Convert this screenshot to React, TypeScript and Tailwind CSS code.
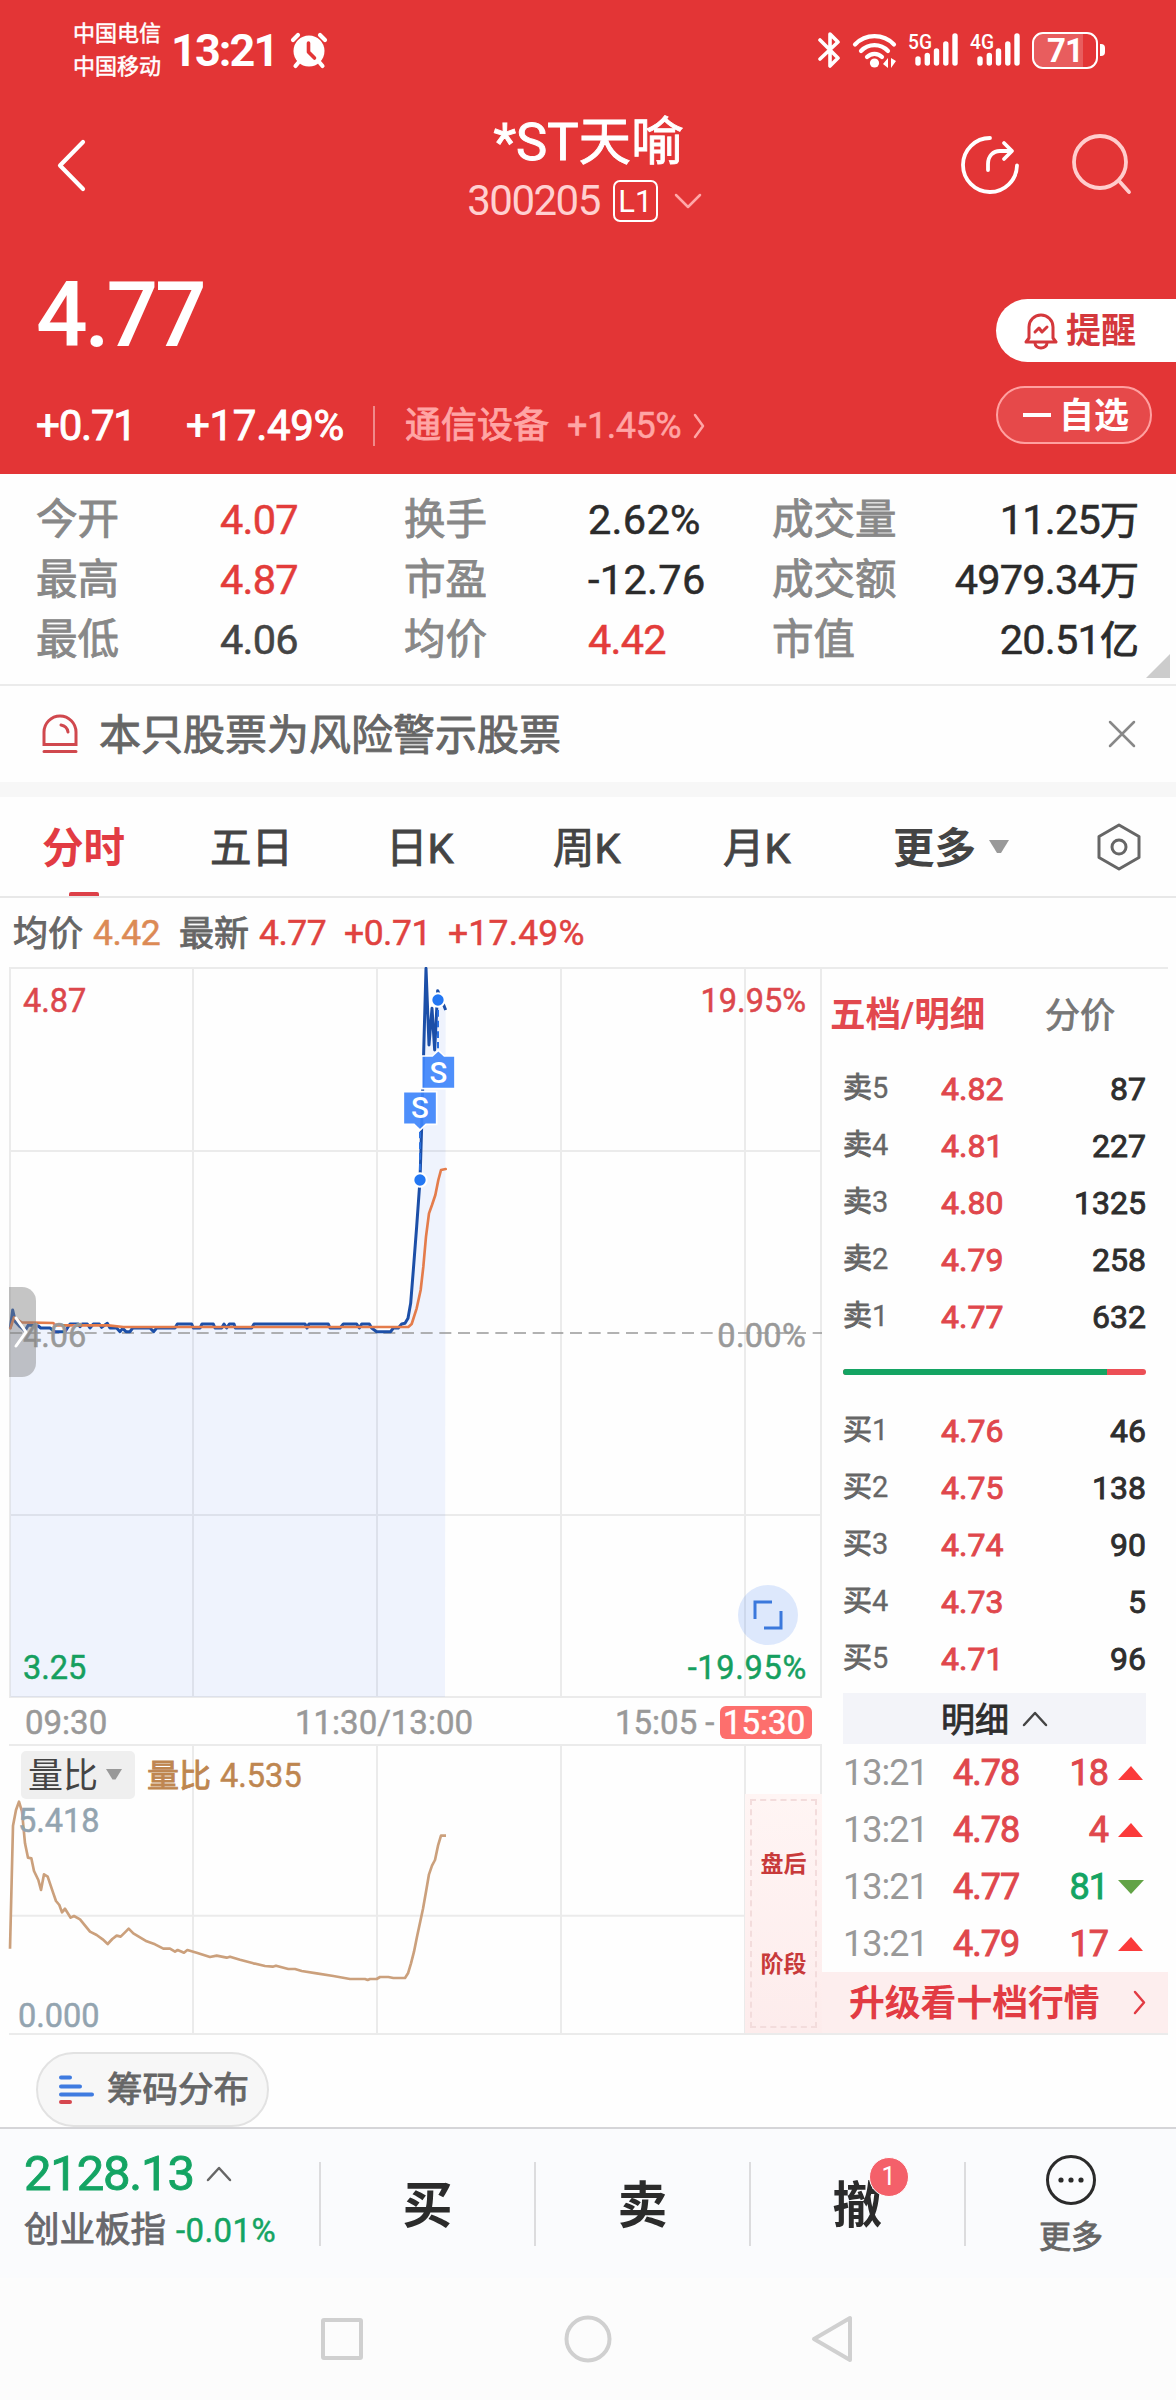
import type { ReactNode } from 'react';
import clsx from 'clsx';

interface Quote {
  label: string;
  value: string;
  unit?: string;
  tone?: 'up' | 'flat';
}

const quotes: Quote[][] = [
  [
    { label: '今开', value: '4.07', tone: 'up' },
    { label: '换手', value: '2.62%' },
    { label: '成交量', value: '11.25', unit: '万' },
  ],
  [
    { label: '最高', value: '4.87', tone: 'up' },
    { label: '市盈', value: '-12.76' },
    { label: '成交额', value: '4979.34', unit: '万' },
  ],
  [
    { label: '最低', value: '4.06', tone: 'flat' },
    { label: '均价', value: '4.42', tone: 'up' },
    { label: '市值', value: '20.51', unit: '亿' },
  ],
];

const asks = [
  ['5', '4.82', '87'],
  ['4', '4.81', '227'],
  ['3', '4.80', '1325'],
  ['2', '4.79', '258'],
  ['1', '4.77', '632'],
];

const bids = [
  ['1', '4.76', '46'],
  ['2', '4.75', '138'],
  ['3', '4.74', '90'],
  ['4', '4.73', '5'],
  ['5', '4.71', '96'],
];

const trades = [
  { time: '13:21', price: '4.78', volume: '18', up: true },
  { time: '13:21', price: '4.78', volume: '4', up: true },
  { time: '13:21', price: '4.77', volume: '81', up: false },
  { time: '13:21', price: '4.79', volume: '17', up: true },
];

const medium = '[-webkit-text-stroke:0.9px]';
const semi = '[-webkit-text-stroke:0.5px]';

// Chart series, in thirds of a pixel
const priceLine =
  '31,1105 38,1050 46,1085 60,1100 75,1112 85,1095 115,1098 122,1104 150,1104 165,1115 195,1115 210,1092 235,1092 240,1100 247,1092 262,1092 270,1104 280,1092 298,1092 305,1102 322,1090 330,1104 350,1104 360,1115 368,1105 378,1115 390,1115 398,1104 450,1104 461,1115 470,1104 525,1104 532,1092 575,1092 580,1104 600,1104 606,1092 640,1092 645,1104 665,1104 672,1092 680,1104 688,1092 702,1092 706,1104 755,1104 762,1092 915,1092 921,1104 927,1092 985,1092 990,1104 1020,1104 1030,1092 1070,1092 1078,1104 1085,1092 1108,1092 1115,1104 1130,1115 1172,1115 1180,1104 1195,1104 1205,1092 1215,1090 1224,1075 1232,1030 1240,930 1250,800 1260,660 1265,500 1272,240 1278,25 1287,255 1296,145 1304,270 1313,92 1325,120 1337,150';

const averageLine =
  '31,1105 42,1072 65,1087 160,1089 165,1096 325,1096 370,1101 1225,1101 1235,1092 1250,1045 1262,990 1270,920 1278,830 1287,760 1296,735 1306,705 1315,660 1323,630 1337,627';

const ratioLine =
  '30,806 39,437 48,390 57,365 66,395 75,490 84,533 94,535 102,573 115,600 123,630 132,583 143,590 160,640 168,663 178,675 186,697 195,686 212,713 222,708 240,718 270,755 290,765 308,778 323,792 337,777 350,767 362,770 375,757 386,746 400,760 440,784 465,793 490,806 510,806 525,815 533,810 552,818 562,810 590,818 630,831 650,827 680,833 690,830 720,839 760,850 795,858 818,860 828,857 865,867 885,867 905,873 950,880 1000,888 1050,897 1095,897 1103,900 1110,897 1130,897 1140,891 1165,891 1180,894 1215,894 1224,880 1233,850 1242,815 1251,770 1260,728 1269,686 1278,635 1287,583 1296,557 1305,540 1314,497 1323,467 1338,467';

function Chevron({ className, d, width, height, stroke = 2.5 }: {
  className?: string;
  d: string;
  width: number;
  height: number;
  stroke?: number;
}) {
  return (
    <svg width={width} height={height} viewBox={`0 0 ${width} ${height}`} className={clsx('shrink-0', className)}>
      <path d={d} fill="none" stroke="currentColor" strokeWidth={stroke} strokeLinecap="round" strokeLinejoin="round" />
    </svg>
  );
}

function Signal({ label }: { label: string }) {
  return (
    <svg width="54" height="52" viewBox="0 -8 54 52" className="shrink-0 overflow-visible">
      <text x="0" y="17" fontSize="21" fontWeight="500" fill="#fff" textLength="24" lengthAdjust="spacingAndGlyphs">
        {label}
      </text>
      <g stroke="#fff" strokeWidth="5.4" strokeLinecap="round">
        <path d="M10 27v4M19.3 23.5v7.5M28.5 19v12M37.8 12v19M47 4v27" />
      </g>
    </svg>
  );
}

function StatusBar() {
  return (
    <div className="flex h-[100px] items-center pl-[73px] pr-[71px] text-white">
      <div className={clsx('-mt-px w-[98px] text-[22px] leading-[33px]', semi)}>
        <div className="whitespace-nowrap">中国电信</div>
        <div className="whitespace-nowrap">中国移动</div>
      </div>
      <div className="w-[118px] text-[45px] font-bold leading-none tracking-[-1.900px]">13:21</div>
      <svg width="40" height="40" viewBox="0 0 40 40" className="shrink-0">
        <circle cx="20" cy="21" r="15.5" fill="#fff" />
        <path d="M9 33l-2.500 3M31 33l2.500 3M4 10l5-5M36 10l-5-5" stroke="#fff" strokeWidth="4.200" strokeLinecap="round" />
        <path d="M19.500 13v9l6 6" fill="none" stroke="#e33536" strokeWidth="3.600" strokeLinecap="round" strokeLinejoin="round" />
      </svg>
      <svg width="24" height="38" viewBox="0 0 24 38" className="ml-auto shrink-0">
        <path d="M2 9l18 18-8 8V3l8 8L2 28" fill="none" stroke="#fff" strokeWidth="3.600" strokeLinecap="round" strokeLinejoin="round" />
      </svg>
      <svg width="46" height="38" viewBox="0 0 46 38" className="ml-[10px] shrink-0">
        <g fill="none" stroke="#fff" strokeWidth="4.200" strokeLinecap="round">
          <path d="M3 13.500a27 27 0 0 1 39 0" />
          <path d="M9 20a18.500 18.500 0 0 1 27 0" />
          <path d="M15 26a10.500 10.500 0 0 1 15 0" />
        </g>
        <circle cx="22.500" cy="32" r="4.600" fill="#fff" />
        <path d="M31 33l5-6v10M39 27v10l5-7z" fill="#fff" />
      </svg>
      <div className="ml-[10px] flex gap-[8px]">
        <Signal label="5G" />
        <Signal label="4G" />
      </div>
      <div className="relative ml-[8px] flex h-[37px] w-[66px] shrink-0 items-center justify-center overflow-hidden rounded-[11px] border-[2.5px] border-white">
        <div className="absolute inset-y-0 left-0 w-[49px] bg-white/20" />
        <span className="relative text-[33px] font-bold leading-none tracking-[-1px]">71</span>
      </div>
      <div className="ml-[2px] h-[12px] w-[5px] shrink-0 rounded-r-[4px] bg-white" />
    </div>
  );
}

function TitleBar() {
  return (
    <div className="flex h-[130px] items-start pl-[56px] pr-[43px] text-white">
      <Chevron d="M27 4L4 27.500 27 51" width={31} height={55} stroke={4.2} className="mt-[38px]" />
      <div className="ml-[135px] flex flex-1 flex-col items-center">
        <div className={clsx('mt-[13px] h-[58px] whitespace-nowrap pr-[3px] text-[52.500px] leading-[58px]', medium)}>*ST天喻</div>
        <div className="mt-[5px] flex h-[50px] items-center pr-[11px]">
          <span className="text-[42px] leading-none tracking-[-1.500px] text-[#ffd0d0]">300205</span>
          <span className="ml-[13px] flex h-[42px] w-[45px] items-center justify-center rounded-[7px] border-2 border-white text-[31px] leading-none">
            L1
          </span>
          <Chevron d="M2 3l12 12L26 3" width={28} height={18} className="ml-[16px] text-[#ffa8a8]" />
        </div>
      </div>
      <svg width="62" height="62" viewBox="0 0 62 62" className="mt-[34px] shrink-0">
        <g fill="none" stroke="#fff" strokeWidth="3.800" strokeLinecap="round" strokeLinejoin="round">
          <path d="M32 4a27 27 0 1 0 27 27.500" />
          <path d="M30 36v-6c0-8 5-13 12-13h11M46 9l8 8-8 8" />
        </g>
      </svg>
      <svg width="62" height="62" viewBox="0 0 62 62" className="ml-[51px] mt-[34px] shrink-0">
        <circle cx="29" cy="28" r="26" fill="none" stroke="#ffcdcd" strokeWidth="3.800" />
        <path d="M49 48l9 10" stroke="#ffcdcd" strokeWidth="3.800" strokeLinecap="round" />
      </svg>
    </div>
  );
}

function PriceHeader() {
  return (
    <div className="flex h-[244px] text-white">
      <div className="flex-1 pl-[36px]">
        <div className="mt-[39px] h-[92px] text-[91px] font-medium leading-[92px] tracking-[-3.200px]">4.77</div>
        <div className="mt-[41px] flex h-[48px] items-center leading-none">
          <span className={clsx('w-[150px] text-[42px] tracking-[-1.200px]', medium)}>+0.71</span>
          <span className={clsx('w-[187px] text-[42px] tracking-[-0.300px]', medium)}>+17.49%</span>
          <span className="h-[40px] w-[2px] bg-[#f08a8a]" />
          <span className={clsx('ml-[30px] text-[36px] text-[#ffa5a5]', medium)}>通信设备</span>
          <span className={clsx('ml-[18px] text-[36px] tracking-[-0.500px] text-[#ffa5a5]', semi)}>+1.45%</span>
          <Chevron d="M3 3l8 11-8 11" width={15} height={28} className="ml-[11px] text-[#ffa5a5]" />
        </div>
      </div>
      <div className="w-[180px]">
        <div className="mt-[69px] flex h-[63px] items-center rounded-l-full bg-white pl-[28px] text-[#d4383c]">
          <svg width="34" height="38" viewBox="0 0 34 38">
            <g fill="none" stroke="#d4383c" strokeWidth="3" strokeLinejoin="round" strokeLinecap="round">
              <path d="M5 26V15a12 12 0 0 1 24 0v11l3 4H2z" />
              <path d="M11 31a6 5 0 0 0 12 0M11 20l4-4 3 4 5-5" />
            </g>
          </svg>
          <span className="ml-[8px] pt-[2px] text-[35px] font-bold leading-none">提醒</span>
        </div>
        <div className="mt-[24px] flex h-[58px] w-[156px] items-center rounded-full border-2 border-[#ffa0a0] bg-white/10 pl-[25px]">
          <span className="h-[4px] w-[28px] bg-white" />
          <span className="ml-[8px] pt-[2px] text-[35px] font-bold leading-none">自选</span>
        </div>
      </div>
    </div>
  );
}

function Stats() {
  return (
    <div className="relative h-[212px] border-b-2 border-[#ebebeb] pt-[16px]">
      {quotes.map((row, i) => (
        <div key={i} className="flex h-[60px] items-center pl-[36px] pr-[37px] leading-none">
          {row.map((q, j) => (
            <div key={q.label} className={clsx('flex items-center', j < 2 ? 'w-[368px]' : 'flex-1')}>
              <span className={clsx('text-[41.500px] text-[#888]', medium, j < 2 && 'w-[184px]')}>{q.label}</span>
              <span
                className={clsx(
                  'text-[41.500px]',
                  semi,
                  j === 2 && 'ml-auto',
                  j === 1 && !q.tone ? 'tracking-[0.300px]' : 'tracking-[-0.800px]',
                  q.tone === 'up' ? 'text-[#e33c3a]' : q.tone === 'flat' ? 'text-[#444]' : 'text-[#2b2b2b]',
                )}
              >
                {q.value}
                {q.unit && <span className={clsx('text-[39px] tracking-normal', medium)}>{q.unit}</span>}
              </span>
            </div>
          ))}
        </div>
      ))}
      <svg width="24" height="24" className="absolute bottom-[6px] right-[6px]">
        <path d="M24 0v24H0z" fill="#ccc" />
      </svg>
    </div>
  );
}

function RiskNotice() {
  return (
    <div className="flex h-[96px] items-center pl-[41px] pr-[40px]">
      <svg width="38" height="40" viewBox="0 0 38 40" className="shrink-0">
        <g fill="none" stroke="#d0484e" strokeWidth="3" strokeLinecap="round">
          <path d="M3 30.500V18a16 16 0 0 1 32 0v12.500z" />
          <path d="M3 37.500h32M20 11q6 1 7 7" />
        </g>
      </svg>
      <span className={clsx('ml-[20px] pt-[4px] text-[42px] leading-none text-[#666]', medium)}>本只股票为风险警示股票</span>
      <svg width="28" height="28" viewBox="0 0 28 28" className="ml-auto">
        <path d="M2 2l24 24M26 2L2 26" stroke="#888" strokeWidth="2.500" strokeLinecap="round" />
      </svg>
    </div>
  );
}

function PeriodTabs() {
  return (
    <div className={clsx('flex h-[101px] items-center border-b-2 border-[#e8e8e8] text-[41.500px] leading-none text-[#444]', medium)}>
      <div className="relative ml-[42px] flex h-full w-[168px] items-center pt-[5px] font-bold text-[#e23b43] [-webkit-text-stroke:0]">
        分时
        <span className="absolute bottom-0 left-[27px] h-[4px] w-[30px] rounded-t-[2px] bg-[#dd4048]" />
      </div>
      <span className="w-[176px] pt-[5px]">五日</span>
      <span className="w-[167px] pt-[5px]">日K</span>
      <span className="w-[170px] pt-[5px]">周K</span>
      <span className="w-[170px] pt-[5px]">月K</span>
      <span className="pt-[5px] font-bold [-webkit-text-stroke:0]">更多</span>
      <svg width="20" height="14" className="ml-[13px]">
        <path d="M0 0h20L12 13h-4z" fill="#999" />
      </svg>
      <svg width="46" height="50" viewBox="0 0 46 50" className="ml-auto mr-[34px]">
        <g fill="none" stroke="#666" strokeWidth="3" strokeLinejoin="round">
          <path d="M23 3l20 11.500v21L23 47 3 35.500v-21z" />
          <circle cx="23" cy="25" r="7" />
        </g>
      </svg>
    </div>
  );
}

function Legend() {
  return (
    <div className={clsx('flex h-[69px] items-center pl-[13px] pt-[3px] text-[35.500px] leading-none tracking-[-0.500px] text-[#e0423f]', semi)}>
      <span className={clsx('w-[80px] text-[35px] tracking-normal text-[#666]', medium)}>均价</span>
      <span className="w-[86px] text-[#dc8a55]">4.42</span>
      <span className={clsx('w-[80px] text-[35px] tracking-normal text-[#666]', medium)}>最新</span>
      <span className="w-[85px]">4.77</span>
      <span className="w-[104px]">+0.71</span>
      <span className="tracking-[0.200px]">+17.49%</span>
    </div>
  );
}

function TradeMark({ x, y, up }: { x: number; y: number; up?: boolean }) {
  return (
    <g>
      <path
        d={up
          ? `M${x - 50} ${y}h32l18-17 18 17h32v98h-100z`
          : `M${x - 50} ${y}h100v98h-32l-18 17-18-17h-32z`}
        fill="#3f85fb"
        fillOpacity="0.92"
        stroke="#fff"
        strokeWidth="5"
      />
      <text x={x} y={y + 80} fontSize="88" fontWeight="500" fill="#fff" textAnchor="middle">S</text>
    </g>
  );
}

function PriceChart() {
  return (
    <div className="relative h-[731px] w-[822px]">
      <svg width="822" height="731" viewBox="0 21 2466 2193" className="block">
        <g stroke="#ebebeb" strokeWidth="6" fill="none">
          <path d="M30 24H2463V2211H30z" />
          <path d="M579 24V2211M1131 24V2211M1683 24V2211M2235 24V2211M30 573H2463M30 1665H2463" />
        </g>
        <polygon points={`${priceLine} 1335,2211 31,2211`} fill="#2f6fef" fillOpacity="0.075" />
        <path d="M30 1119H2466" stroke="#999" strokeWidth="5" strokeDasharray="36 20" />
        <polyline points={priceLine} fill="none" stroke="#1c4fa8" strokeWidth="9" strokeLinejoin="round" />
        <polyline points={averageLine} fill="none" stroke="#e47c4b" strokeWidth="8" strokeLinejoin="round" strokeLinecap="round" />
        <path d="M1260 515V640M1314 150V265" stroke="#2a70e0" strokeWidth="6" strokeDasharray="20 12" />
        <TradeMark x={1315} y={288} up />
        <TradeMark x={1260} y={395} />
        <g fill="#2377f3" stroke="#fff" strokeWidth="6">
          <circle cx="1314" cy="120" r="20" />
          <circle cx="1260" cy="660" r="20" />
        </g>
      </svg>
      <div className={clsx('text-[32.500px] leading-[40px]', semi)}>
        <span className="absolute left-[23px] top-[14px] text-[#dc474c]">4.87</span>
        <span className="absolute right-[16px] top-[14px] text-[#dc474c]">19.95%</span>
        <span className="absolute left-[23px] top-[349px] text-[#999]">4.06</span>
        <span className="absolute right-[16px] top-[349px] tracking-[0.300px] text-[#999]">0.00%</span>
        <span className="absolute left-[23px] top-[681px] text-[#169f5f]">3.25</span>
        <span className="absolute right-[15px] top-[681px] tracking-[0.700px] text-[#169f5f]">-19.95%</span>
      </div>
      <div className="absolute left-[9px] top-[320px] flex h-[90px] w-[27px] items-center rounded-r-[14px] bg-[#808080]/45 pl-[4px] text-white">
        <Chevron d="M3 3l10 14L3 31" width={16} height={34} stroke={3} />
      </div>
      <div className="absolute left-[738px] top-[618px] flex size-[60px] items-center justify-center rounded-full bg-[#3b7cf2]/17">
        <svg width="30" height="30" viewBox="0 0 30 30">
          <path d="M2 19V2h17M11 28h17V11" fill="none" stroke="#3b78dc" strokeWidth="3" />
        </svg>
      </div>
    </div>
  );
}

function TimeAxis() {
  return (
    <div className={clsx('flex h-[46px] items-center pl-[25px] pt-[2px] text-[33px] leading-none text-[#999]', semi)}>
      <span className="w-[270px]">09:30</span>
      <span className="w-[320px]">11:30/13:00</span>
      <span className="w-[105px] whitespace-nowrap">15:05 -</span>
      <span className="flex h-[33px] w-[92px] items-center rounded-[6px] bg-[#fd6f6d] pl-[3px] text-white">15:30</span>
    </div>
  );
}

function RatioChart() {
  return (
    <div className="relative h-[292px] w-[822px]">
      <svg width="822" height="292" viewBox="0 192 2466 876" className="block">
        <g stroke="#ebebeb" strokeWidth="6" fill="none">
          <path d="M27 195H2463V1062H27M579 195V1062M1131 195V1062M1683 195V1062M2235 195V1062M30 707H2463" />
        </g>
        <polyline points={ratioLine} fill="none" stroke="#cba07c" strokeWidth="8" strokeLinejoin="round" />
      </svg>
      <div className="absolute left-[21px] top-[7px] flex h-[48px] w-[114px] items-center rounded-[5px] bg-[#efefef] pl-[7px]">
        <span className="pt-[3px] text-[35px] leading-none text-[#444]">量比</span>
        <svg width="16" height="12" className="ml-[8px]">
          <path d="M0 0h16L9.500 10.500h-3z" fill="#999" />
        </svg>
      </div>
      <div className="absolute left-[147px] top-[11px] flex items-center leading-[42px] text-[#be8650]">
        <span className={clsx('text-[32px]', medium)}>量比</span>
        <span className={clsx('ml-[9px] text-[32.500px]', semi)}>4.535</span>
      </div>
      <div className={clsx('text-[32.500px] leading-[40px] text-[#93a4b0]', semi)}>
        <span className="absolute left-[18px] top-[57px]">5.418</span>
        <span className="absolute left-[18px] top-[252px]">0.000</span>
      </div>
      <div className="absolute left-[745px] top-[50px] h-[239px] w-[77px] bg-gradient-to-b from-[#fff5f4] to-[#fdecec] p-[5px]">
        <div className="flex h-full flex-col items-center border-2 border-dashed border-[#f3dcdc] text-[23px] font-bold leading-[28px] text-[#c83a3a]">
          <span className="mt-[50px]">盘后</span>
          <span className="mt-[72px]">阶段</span>
        </div>
      </div>
    </div>
  );
}

function BookRow({ side, row }: { side: string; row: string[] }) {
  return (
    <div className={clsx('flex h-[57px] items-center text-[32px] leading-none', medium)}>
      <span className="w-[98px] text-[29px] text-[#666] [-webkit-text-stroke:0.3px]">
        <span className={clsx('text-[29px]', medium)}>{side}</span>
        {row[0]}
      </span>
      <span className="text-[#e0474c]">{row[1]}</span>
      <span className="ml-auto text-[#2e2e2e]">{row[2]}</span>
    </div>
  );
}

function OrderBook() {
  return (
    <div className="flex flex-1 flex-col border-t-2 border-[#ebebeb]">
      <div className="flex h-[91px] items-center pl-[8px] pt-[3px] text-[35.500px] leading-none">
        <span className="w-[215px] font-bold text-[#e2484e]">五档/明细</span>
        <span className={clsx('text-[35px] text-[#777]', medium)}>分价</span>
      </div>
      <div className="pl-[21px] pr-[22px]">
        {asks.map((row) => <BookRow key={row[0]} side="卖" row={row} />)}
        <div className="mb-[27px] mt-[24px] flex h-[6px] w-[303px] overflow-hidden rounded-full bg-[#ec4f56]">
          <div className="w-[264px] bg-[#14a463]" />
        </div>
        {bids.map((row) => <BookRow key={row[0]} side="买" row={row} />)}
      </div>
      <div className="ml-[21px] mt-[6px] flex h-[51px] w-[303px] items-center justify-center bg-[#f3f4f9]">
        <span className={clsx('pt-[3px] text-[34px] leading-none text-[#2e2e2e]', medium)}>明细</span>
        <Chevron d="M2 15L13 3l11 12" width={26} height={18} className="ml-[13px] text-[#444]" />
      </div>
      <div className="pl-[21px] pr-[24px]">
        {trades.map((t, i) => (
          <div key={i} className={clsx('flex h-[57px] items-center text-[36px] leading-none tracking-[-1px]', medium)}>
            <span className="w-[110px] text-[#999] [-webkit-text-stroke:0]">{t.time}</span>
            <span className="text-[#e0474c]">{t.price}</span>
            <span className={clsx('ml-auto', t.up ? 'text-[#e0474c]' : 'text-[#14a463]')}>{t.volume}</span>
            <svg width="26" height="14" className="ml-[10px]">
              {t.up ? <path d="M0 14L13 0l12 14z" fill="#fb3a3a" /> : <path d="M0 0h26L13 14z" fill="#62a346" />}
            </svg>
          </div>
        ))}
      </div>
      <div className="mt-auto flex h-[63px] items-center border-b-2 border-[#ebebeb] bg-[#fdeeee] pl-[27px] pr-[21px] text-[#e23b43]">
        <span className="pt-[4px] text-[35.800px] font-bold leading-none">升级看十档行情</span>
        <Chevron d="M3 3l9 10.500L3 24" width={15} height={27} className="ml-auto" />
      </div>
    </div>
  );
}

function ChipButton() {
  return (
    <div className="flex h-[92px] items-end pl-[36px]">
      <div className="flex h-[75px] w-[233px] items-center rounded-full border-2 border-[#e2e2e2] bg-[#f7f7f7] pl-[21px]">
        <svg width="36" height="30" viewBox="0 0 36 30">
          <g strokeWidth="4" strokeLinecap="round" stroke="#3f7be0">
            <path d="M2 2.500h9M2 11.500h19M2 19.500h31" />
            <path d="M2 27h9" stroke="#d6474f" />
          </g>
        </svg>
        <span className={clsx('ml-[12px] pt-[3px] text-[35.500px] leading-none text-[#666]', medium)}>筹码分布</span>
      </div>
    </div>
  );
}

function TradeButton({ children }: { children: ReactNode }) {
  return (
    <div className="flex h-[84px] w-[215px] items-center justify-center border-l-2 border-[#dcdcde] pt-[4px] text-[50px] font-bold leading-none text-[#2b2b2b]">
      {children}
    </div>
  );
}

function BottomBar() {
  return (
    <div className="flex h-[151px] items-center border-t-2 border-[#d5d5d8] bg-[#fafbfd]">
      <div className="w-[319px] pb-[7px] pl-[24px]">
        <div className="flex h-[52px] items-center text-[#14a463]">
          <span className={clsx('text-[49px] leading-none tracking-[-1.200px]', medium)}>2128.13</span>
          <Chevron d="M2 15L13 3l11 12" width={26} height={18} className="ml-[12px] text-[#666]" />
        </div>
        <div className="mt-[9px] flex h-[44px] items-center whitespace-nowrap">
          <span className={clsx('text-[35.500px] leading-none text-[#68686c]', medium)}>创业板指</span>
          <span className={clsx('ml-[10px] text-[33px] leading-none tracking-[0.400px] text-[#14a463]', semi)}>-0.01%</span>
        </div>
      </div>
      <TradeButton>买</TradeButton>
      <TradeButton>卖</TradeButton>
      <TradeButton>
        <span className="relative">
          撤
          <span className="absolute -top-[24px] left-[36px] flex size-[40px] items-center justify-center rounded-full border border-white bg-[#f4606a] text-[25px] font-normal text-white">
            1
          </span>
        </span>
      </TradeButton>
      <div className="flex h-[84px] flex-1 flex-col items-center justify-center border-l-2 border-[#dcdcde]">
        <svg width="52" height="52" viewBox="0 0 52 52" className="shrink-0">
          <circle cx="26" cy="26" r="23.500" fill="none" stroke="#2b2b2b" strokeWidth="3" />
          <g fill="#2b2b2b">
            <circle cx="16" cy="26" r="2.600" />
            <circle cx="26" cy="26" r="2.600" />
            <circle cx="36" cy="26" r="2.600" />
          </g>
        </svg>
        <span className={clsx('mt-[15px] text-[32px] leading-none text-[#666]', medium)}>更多</span>
      </div>
    </div>
  );
}

function SystemNav() {
  return (
    <div className="flex flex-1 items-center bg-[#fcfcfc] pl-[320px]">
      <svg width="534" height="50" viewBox="0 0 534 50">
        <g fill="none" stroke="#d0d0d0" strokeWidth="4" strokeLinejoin="round">
          <rect x="3" y="6" width="38" height="38" rx="1" />
          <circle cx="268" cy="25" r="21.500" />
          <path d="M530 4v42L494 25z" />
        </g>
      </svg>
    </div>
  );
}

export default function App() {
  return (
    <div className="flex h-[2400px] w-[1176px] flex-col overflow-hidden bg-[#fefefe] font-['Roboto','Noto_Sans_CJK_SC',sans-serif]">
      <header className="h-[474px] bg-[#e33536]">
        <StatusBar />
        <TitleBar />
        <PriceHeader />
      </header>
      <Stats />
      <RiskNotice />
      <div className="h-[15px] bg-[#f7f7f7]" />
      <PeriodTabs />
      <Legend />
      <div className="flex h-[1068px] pr-[9px]">
        <div className="w-[822px] shrink-0">
          <PriceChart />
          <TimeAxis />
          <RatioChart />
        </div>
        <OrderBook />
      </div>
      <ChipButton />
      <BottomBar />
      <SystemNav />
    </div>
  );
}
